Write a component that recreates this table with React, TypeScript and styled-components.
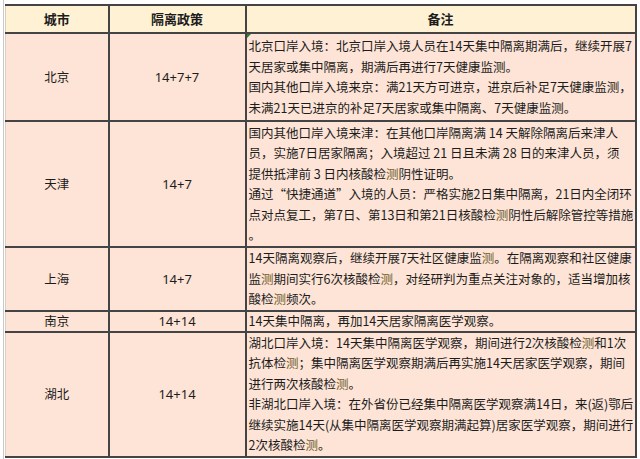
import React from "react";
import styled, { createGlobalStyle } from "styled-components";

const Global = createGlobalStyle`
  html, body { margin: 0; padding: 0; background: #ffffff; }
  body { font-family: "Noto Sans CJK SC", "Noto Sans", sans-serif; color: #1c1c1c; }
`;

const Frame = styled.div`
  margin-left: 3px;
  border-left: 1px solid #c9c9c9;
  padding: 4px 0 0 1px;
  width: 632px;
  height: 455px;
  overflow: hidden;
`;

const Table = styled.table`
  border-collapse: collapse;
  table-layout: fixed;
  width: 630px;
  font-size: 12.5px;
  line-height: 20.5px;
`;

const HeadRow = styled.tr`
  height: 28px;
`;

const HeadCell = styled.th`
  background: #fff2d4;
  border: 2px solid #444;
  border-left: 1px solid #d6d0c0;
  font-weight: 700;
  font-size: 13px;
  line-height: 18px;
  text-align: center;
  vertical-align: middle;
  padding: 0;
  & + & { border-left: 2px solid #444; }
`;

const Row = styled.tr<{ $h: number; $lh?: number }>`
  height: ${(p) => p.$h}px;
  & > td { line-height: ${(p) => (p.$lh ? `${p.$lh}px` : "inherit")}; }
`;

const Cell = styled.td<{ $center?: boolean; $first?: boolean; $flag?: boolean }>`
  position: relative;
  background: #fde4d6;
  border: 2px solid #444;
  border-left: ${(p) => (p.$first ? "1px solid #d8cfc8" : "2px solid #444")};
  padding: 0 0 0 ${(p) => (p.$center ? "0" : "2px")};
  text-align: ${(p) => (p.$center ? "center" : "left")};
  vertical-align: middle;
  white-space: nowrap;
  overflow: hidden;
  ${(p) =>
    p.$flag
      ? `&::before {
    content: "";
    position: absolute;
    left: 0;
    top: 0;
    width: 0;
    height: 0;
    border-top: 4px solid #2e7d32;
    border-right: 4px solid transparent;
  }`
      : ""}
`;

const Num = styled.span`
  font-family: "Noto Sans", "Noto Sans CJK SC", sans-serif;
  font-size: 13px;
`;

const Hl = styled.span`
  color: #6f5d2c;
`;

const Lines: React.FC<{ lines: React.ReactNode[] }> = ({ lines }) => (
  <>
    {lines.map((l, i) => (
      <React.Fragment key={i}>
        {l}
        {i < lines.length - 1 && <br />}
      </React.Fragment>
    ))}
  </>
);

const T = "测";

export default function App() {
  return (
    <>
      <Global />
      <Frame>
        <Table>
          <colgroup>
            <col style={{ width: 103 }} />
            <col style={{ width: 137 }} />
            <col style={{ width: 390 }} />
          </colgroup>
          <thead>
            <HeadRow>
              <HeadCell>城市</HeadCell>
              <HeadCell>隔离政策</HeadCell>
              <HeadCell>备注</HeadCell>
            </HeadRow>
          </thead>
          <tbody>
            <Row $h={88}>
              <Cell $center $first>北京</Cell>
              <Cell $center><Num>14+7+7</Num></Cell>
              <Cell $flag>
                <Lines
                  lines={[
                    "北京口岸入境：北京口岸入境人员在14天集中隔离期满后，继续开展7",
                    "天居家或集中隔离，期满后再进行7天健康监测。",
                    "国内其他口岸入境来京：满21天方可进京，进京后补足7天健康监测，",
                    "未满21天已进京的补足7天居家或集中隔离、7天健康监测。",
                  ]}
                />
              </Cell>
            </Row>
            <Row $h={126}>
              <Cell $center $first>天津</Cell>
              <Cell $center><Num>14+7</Num></Cell>
              <Cell>
                <Lines
                  lines={[
                    "国内其他口岸入境来津：在其他口岸隔离满 14 天解除隔离后来津人",
                    "员，实施7日居家隔离；入境超过 21 日且未满 28 日的来津人员，须",
                    <>提供抵津前 3 日内核酸检<Hl>{T}</Hl>阴性证明。</>,
                    "通过“快捷通道”入境的人员：严格实施2日集中隔离，21日内全闭环",
                    <>点对点复工，第7日、第13日和第21日核酸检<Hl>{T}</Hl>阴性后解除管控等措施</>,
                    "。",
                  ]}
                />
              </Cell>
            </Row>
            <Row $h={63}>
              <Cell $center $first>上海</Cell>
              <Cell $center><Num>14+7</Num></Cell>
              <Cell>
                <Lines
                  lines={[
                    <>14天隔离观察后，继续开展7天社区健康监<Hl>{T}</Hl>。在隔离观察和社区健康</>,
                    <>监<Hl>{T}</Hl>期间实行6次核酸检<Hl>{T}</Hl>，对经研判为重点关注对象的，适当增加核</>,
                    <>酸检<Hl>{T}</Hl>频次。</>,
                  ]}
                />
              </Cell>
            </Row>
            <Row $h={21} $lh={18}>
              <Cell $center $first>南京</Cell>
              <Cell $center><Num>14+14</Num></Cell>
              <Cell>14天集中隔离，再加14天居家隔离医学观察。</Cell>
            </Row>
            <Row $h={125}>
              <Cell $center $first>湖北</Cell>
              <Cell $center><Num>14+14</Num></Cell>
              <Cell>
                <Lines
                  lines={[
                    <>湖北口岸入境：14天集中隔离医学观察，期间进行2次核酸检<Hl>{T}</Hl>和1次</>,
                    <>抗体检<Hl>{T}</Hl>；集中隔离医学观察期满后再实施14天居家医学观察，期间</>,
                    <>进行两次核酸检<Hl>{T}</Hl>。</>,
                    "非湖北口岸入境：在外省份已经集中隔离医学观察满14日，来(返)鄂后",
                    "继续实施14天(从集中隔离医学观察期满起算)居家医学观察，期间进行",
                    <>2次核酸检<Hl>{T}</Hl>。</>,
                  ]}
                />
              </Cell>
            </Row>
          </tbody>
        </Table>
      </Frame>
    </>
  );
}
